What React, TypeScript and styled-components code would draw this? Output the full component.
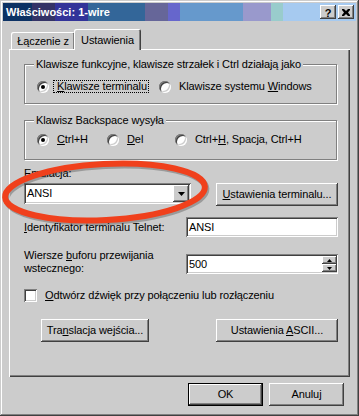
import React from "react";
import styled, { createGlobalStyle } from "styled-components";

const face = "#cccccc";
const light = "#ffffff";
const shadow = "#808080";
const dark = "#404040";

const raised = `box-shadow: inset -1px -1px 0 ${dark}, inset 1px 1px 0 ${light}, inset -2px -2px 0 ${shadow}, inset 2px 2px 0 ${face};`;
const sunken = `box-shadow: inset 1px 1px 0 ${shadow}, inset -1px -1px 0 ${light}, inset 2px 2px 0 ${dark}, inset -2px -2px 0 ${face};`;

const GlobalStyle = createGlobalStyle`
  html, body {
    margin: 0;
    padding: 0;
    background: ${face};
  }
  body {
    font-family: "Liberation Sans", Arial, sans-serif;
    font-size: 11px;
    letter-spacing: -0.1px;
    color: #000;
  }
  * {
    box-sizing: border-box;
  }
`;

const Window = styled.div`
  position: relative;
  width: 359px;
  height: 416px;
  padding: 3px;
  background: ${face};
  box-shadow: inset -1px -1px 0 ${dark}, inset 1px 1px 0 ${face},
    inset -2px -2px 0 ${shadow}, inset 2px 2px 0 ${light};
  display: flex;
  flex-direction: column;
`;

// posterized caption gradient, as in the screenshot
const TitleBar = styled.div`
  height: 18px;
  display: flex;
  align-items: center;
  padding: 0 2px 0 3px;
  background: linear-gradient(
    to right,
    #0c3264 0 29px,
    #343366 29px 52px,
    #323399 52px 85px,
    #336699 85px 142px,
    #666699 142px 165px,
    #6666cc 165px 177px,
    #6699cc 177px 240px,
    #9999cc 240px 268px,
    #99cccc 268px 280px,
    #a6caf0 280px
  );
`;

const Title = styled.span`
  flex: 1;
  color: #fff;
  font-weight: bold;
  font-size: 11px;
  letter-spacing: 0;
`;

const CaptionButton = styled.div`
  width: 16px;
  height: 14px;
  margin-left: 2px;
  background: ${face};
  ${raised}
  display: flex;
  align-items: center;
  justify-content: center;
  font-weight: bold;
  font-size: 11px;
  line-height: 14px;
  padding-top: 1px;
`;

const Content = styled.div`
  flex: 1;
  display: flex;
  flex-direction: column;
  padding: 8px 6px 0 6px;
`;

const TabStrip = styled.div`
  height: 20px;
  display: flex;
  align-items: flex-end;
  padding-left: 2px;
  position: relative;
  z-index: 1;
`;

const Tab = styled.div<{ $active?: boolean; $width: number }>`
  width: ${(p) => p.$width}px;
  height: ${(p) => (p.$active ? 21 : 17)}px;
  margin-bottom: ${(p) => (p.$active ? -1 : 0)}px;
  margin-left: ${(p) => (p.$active ? -1 : 0)}px;
  background: ${face};
  border-radius: 2px 2px 0 0;
  box-shadow: inset 1px 1px 0 ${light}, inset -1px 0 0 ${dark},
    inset -2px 0 0 ${shadow};
  display: flex;
  align-items: center;
  justify-content: center;
  padding-top: ${(p) => (p.$active ? 0 : 1)}px;
`;

const Panel = styled.div`
  width: 341px;
  height: 328px;
  padding: 15px 12px 0 15px;
  box-shadow: inset 1px 1px 0 ${light}, inset -1px -1px 0 ${dark},
    inset -2px -2px 0 ${shadow};
  display: flex;
  flex-direction: column;
`;

const Group = styled.div<{ $top: number; $gap?: number }>`
  position: relative;
  width: 313px;
  height: 40px;
  margin-top: ${(p) => p.$gap ?? 0}px;
  border: 1px solid ${shadow};
  box-shadow: inset 1px 1px 0 ${light}, 1px 1px 0 ${light};
  display: flex;
  align-items: flex-start;
  padding: ${(p) => p.$top}px 0 0 12px;
`;

const Legend = styled.span`
  position: absolute;
  top: -7px;
  left: 9px;
  padding: 0 2px;
  line-height: 13px;
  background: ${face};
`;

const Option = styled.div<{ $width?: number }>`
  display: flex;
  align-items: center;
  height: 13px;
  ${(p) => (p.$width ? `width: ${p.$width}px;` : "")}
`;

const RadioDot = styled.span<{ $checked?: boolean }>`
  position: relative;
  width: 12px;
  height: 12px;
  border-radius: 50%;
  background: #fff;
  box-shadow: inset 1px 1px 0 ${shadow}, inset -1px -1px 0 ${light},
    inset 2px 2px 0 ${dark}, inset -2px -2px 0 ${face};
  &::after {
    content: "";
    display: ${(p) => (p.$checked ? "block" : "none")};
    position: absolute;
    left: 4px;
    top: 4px;
    width: 4px;
    height: 4px;
    border-radius: 50%;
    background: #000;
  }
`;

const OptionLabel = styled.span<{ $focused?: boolean }>`
  margin-left: 4px;
  padding: 0 1px 0 3px;
  line-height: 11px;
  border: 1px dotted ${(p) => (p.$focused ? "#000" : "transparent")};
  white-space: nowrap;
`;

const Key = styled.span`
  text-decoration: underline;
  text-underline-offset: 1px;
`;

const Label = styled.div<{ $gap?: number }>`
  line-height: 13px;
  margin-top: ${(p) => p.$gap ?? 0}px;
  white-space: nowrap;
`;

const Row = styled.div<{ $gap: number; $align?: string }>`
  display: flex;
  justify-content: space-between;
  align-items: ${(p) => p.$align ?? "flex-start"};
  margin-top: ${(p) => p.$gap}px;
`;

const Combo = styled.div`
  width: 167px;
  height: 21px;
  padding: 2px;
  background: #fff;
  ${sunken}
  display: flex;
  align-items: center;
`;

const FieldText = styled.span`
  flex: 1;
  padding-left: 1px;
  line-height: 13px;
`;

const DropButton = styled.div`
  width: 16px;
  height: 17px;
  background: ${face};
  ${raised}
  display: flex;
  align-items: center;
  justify-content: center;
`;

const Field = styled.div<{ $gap?: number }>`
  width: 152px;
  height: 20px;
  margin-top: ${(p) => p.$gap ?? 0}px;
  padding: 2px;
  background: #fff;
  ${sunken}
  display: flex;
  align-items: center;
`;

const SpinColumn = styled.div`
  width: 15px;
  height: 16px;
  display: flex;
  flex-direction: column;
  margin-right: -1px;
`;

const SpinButton = styled.div`
  height: 8px;
  background: ${face};
  ${raised}
  display: flex;
  align-items: center;
  justify-content: center;
`;

const CheckBox = styled.span`
  width: 13px;
  height: 13px;
  background: #fff;
  ${sunken}
`;

const CheckRow = styled.div`
  display: flex;
  align-items: center;
  gap: 8px;
  margin-top: 14px;
  line-height: 13px;
`;

const Button = styled.button<{ $width: number; $default?: boolean; $indent?: number }>`
  width: ${(p) => p.$width}px;
  height: 23px;
  margin-left: ${(p) => p.$indent ?? 0}px;
  padding: 0;
  font: inherit;
  letter-spacing: inherit;
  line-height: 13px;
  text-align: center;
  white-space: nowrap;
  color: #000;
  background: ${face};
  border: ${(p) => (p.$default ? "1px solid #000" : "none")};
  ${raised}
`;

const Footer = styled.div`
  display: flex;
  justify-content: flex-end;
  gap: 6px;
  padding-right: 6px;
  margin-top: 6px;
`;

const Marker = styled.svg`
  position: absolute;
  left: 0;
  top: 150px;
  pointer-events: none;
`;

const DownArrow = ({ w = 7 }: { w?: number }) => (
  <svg width={w} height={Math.ceil(w / 2)} viewBox={`0 0 ${w} ${Math.ceil(w / 2)}`}>
    <path d={`M0 0H${w}L${w / 2} ${Math.ceil(w / 2)}Z`} fill="#000" />
  </svg>
);

const UpArrow = ({ w = 5 }: { w?: number }) => (
  <svg width={w} height={Math.ceil(w / 2)} viewBox={`0 0 ${w} ${Math.ceil(w / 2)}`}>
    <path d={`M0 ${Math.ceil(w / 2)}H${w}L${w / 2} 0Z`} fill="#000" />
  </svg>
);

const Radio = ({
  checked,
  focused,
  width,
  children,
}: {
  checked?: boolean;
  focused?: boolean;
  width?: number;
  children: React.ReactNode;
}) => (
  <Option $width={width}>
    <RadioDot $checked={checked} />
    <OptionLabel $focused={focused}>{children}</OptionLabel>
  </Option>
);

const App = () => {
  return (
    <>
      <GlobalStyle />
      <Window>
        <TitleBar>
          <Title>Właściwości: 1-wire</Title>
          <CaptionButton>?</CaptionButton>
          <CaptionButton>
            <svg width="8" height="7" viewBox="0 0 8 7">
              <path
                d="M0 0h2l2 2 2-2h2v1L6 3.5 8 6v1H6L4 5 2 7H0V6l2-2.5L0 1z"
                fill="#000"
              />
            </svg>
          </CaptionButton>
        </TitleBar>
        <Content>
          <TabStrip>
            <Tab $width={64}>Łączenie z</Tab>
            <Tab $width={67} $active>
              Ustawienia
            </Tab>
          </TabStrip>
          <Panel>
            <Group $top={15}>
              <Legend>Klawisze funkcyjne, klawisze strzałek i Ctrl działają jako</Legend>
              <Radio checked focused width={122}>
                <Key>K</Key>lawisze terminalu
              </Radio>
              <Radio>
                Klawisze systemu <Key>W</Key>indows
              </Radio>
            </Group>
            <Group $top={12} $gap={16}>
              <Legend>Klawisz Backspace wysyła</Legend>
              <Radio checked width={70}>
                <Key>C</Key>trl+H
              </Radio>
              <Radio width={68}>
                <Key>D</Key>el
              </Radio>
              <Radio>
                Ctrl+<Key>H</Key>, Spacja, Ctrl+H
              </Radio>
            </Group>
            <Label $gap={7}>
              <Key>E</Key>mulacja:
            </Label>
            <Row $gap={3}>
              <Combo>
                <FieldText>ANSI</FieldText>
                <DropButton>
                  <DownArrow />
                </DropButton>
              </Combo>
              <Button $width={122}>
                <Key>U</Key>stawienia terminalu...
              </Button>
            </Row>
            <Row $gap={11} $align="center">
              <Label>
                <Key>I</Key>dentyfikator terminalu Telnet:
              </Label>
              <Field>
                <FieldText>ANSI</FieldText>
              </Field>
            </Row>
            <Row $gap={12}>
              <Label>
                Wiersze <Key>b</Key>uforu przewijania
                <br />
                wstecznego:
              </Label>
              <Field $gap={5}>
                <FieldText>500</FieldText>
                <SpinColumn>
                  <SpinButton>
                    <UpArrow />
                  </SpinButton>
                  <SpinButton>
                    <DownArrow w={5} />
                  </SpinButton>
                </SpinColumn>
              </Field>
            </Row>
            <CheckRow>
              <CheckBox />
              <span>
                <Key>O</Key>dtwórz dźwięk przy połączeniu lub rozłączeniu
              </span>
            </CheckRow>
            <Row $gap={17}>
              <Button $width={108} $indent={17}>
                Tra<Key>n</Key>slacja wejścia...
              </Button>
              <Button $width={122}>
                Ustawienia <Key>A</Key>SCII...
              </Button>
            </Row>
          </Panel>
          <Footer>
            <Button $width={75} $default>
              OK
            </Button>
            <Button $width={75}>Anuluj</Button>
          </Footer>
        </Content>
        <Marker width="220" height="90" viewBox="0 0 220 90">
          <ellipse
            cx="106.5"
            cy="44"
            rx="100"
            ry="28"
            fill="none"
            stroke="rgba(40,40,40,0.3)"
            strokeWidth="6"
            transform="rotate(-3 106.5 44)"
          />
          <ellipse
            cx="105"
            cy="42"
            rx="100"
            ry="28"
            fill="none"
            stroke="#f0401c"
            strokeWidth="6"
            transform="rotate(-3 105 42)"
          />
        </Marker>
      </Window>
    </>
  );
};

export default App;
